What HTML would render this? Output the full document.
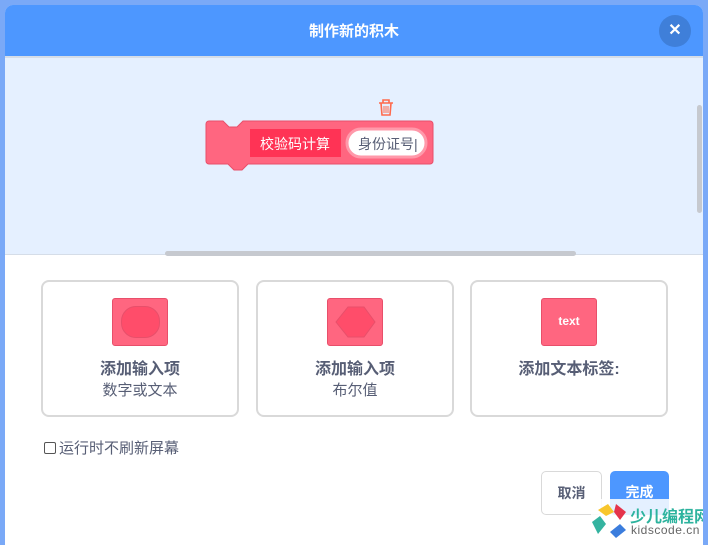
<!DOCTYPE html>
<html><head><meta charset="utf-8"><style>
*{box-sizing:border-box;margin:0;padding:0}
body{width:708px;height:542px;background:#7aa9f7;font-family:"Liberation Sans","Noto Sans CJK SC",sans-serif;position:relative;overflow:hidden}
.dlg{position:absolute;left:5px;top:5px;width:698px;height:540px;background:#fff;border-radius:8px 8px 0 0;overflow:hidden}
.hd{height:51px;background:#4d97ff;color:#fff;font-size:15px;text-align:center;line-height:54px;font-weight:bold}
.x{position:absolute;right:12px;top:10px;width:32px;height:32px;border-radius:50%;background:#3f7fd9;color:#fff;font-size:16px;text-align:center;line-height:32px;font-weight:bold}
.ws{position:absolute;top:51px;left:0;width:698px;height:199px;background:#e5f0ff;border-top:2px solid #d5dde8;border-bottom:1px solid #d5dde8}
.card{position:absolute;top:275px;width:198px;height:137px;border:2px solid #d9d9d9;border-radius:8px;text-align:center;color:#575e75}
.card b{display:block;margin-top:78px;font-size:16px;line-height:20px}
.card span{display:block;font-size:15px;line-height:20px;margin-top:1px}
.ic{position:absolute;left:69px;top:16px;width:56px;height:48px;background:#ff6680;border:1px solid #e84f6a;border-radius:3px}
</style></head><body>
<div class="dlg">
<div class="hd">制作新的积木</div><div class="x">✕</div>
<div class="ws">
<svg width="698" height="199" style="position:absolute;left:0;top:0">
<g transform="translate(381,41)" fill="none" stroke="#ff6a4d" stroke-width="1.6"><path d="M-7 4h14M-3 4v-3h6v3M-5 4l1 12h8l1-12"/><path d="M-2 7v7M0 7v7M2 7v7" stroke-width="1"/></g>
<path d="M204 63 h14 l6 6 h8 l6-6 h187 a3 3 0 0 1 3 3 v37 a3 3 0 0 1-3 3 h-182 l-6 6 h-8 l-6-6 h-19 a3 3 0 0 1-3-3 v-37 a3 3 0 0 1 3-3z" fill="#ff6680" stroke="#e84f6a"/>
<rect x="245" y="71" width="91" height="28" fill="#ff3355"/>
<text x="290" y="91" fill="#fff" font-size="14" text-anchor="middle" font-family="Liberation Sans,Noto Sans CJK SC,sans-serif">校验码计算</text>
<rect x="342" y="71" width="79" height="28" rx="14" fill="#fff" stroke="#ff99aa" stroke-width="3"/>
<text x="353" y="91" fill="#575e75" font-size="14" font-family="Liberation Sans,Noto Sans CJK SC,sans-serif">身份证号|</text>
<rect x="160" y="193" width="411" height="5" rx="2.5" fill="#c6c9cf"/>
<rect x="692" y="47" width="5" height="108" rx="2.5" fill="#c6c9cf"/>
</svg></div>
<div class="card" style="left:36px"><div class="ic"><div style="position:absolute;left:8px;top:7px;width:39px;height:32px;border-radius:15px;border:1px solid #e84f6a;background:#ff4d6a"></div></div><b>添加输入项</b><span>数字或文本</span></div>
<div class="card" style="left:251px"><div class="ic"><svg width="56" height="48" style="position:absolute;left:0;top:0"><path d="M20 8h16l11 15-11 15H20L8 23z" fill="#ff4d6a" stroke="#e84f6a"/></svg></div><b>添加输入项</b><span>布尔值</span></div>
<div class="card" style="left:465px"><div class="ic" style="color:#fff;font-size:12px;font-weight:bold;line-height:44px">text</div><b>添加文本标签:</b></div>
<div style="position:absolute;left:39px;top:432px;font-size:15px;color:#575e75"><span style="display:inline-block;width:12px;height:12px;border:1px solid #555;border-radius:2px;vertical-align:-1px;margin-right:3px"></span>运行时不刷新屏幕</div>
<div style="position:absolute;left:536px;top:466px;width:61px;height:44px;border:1px solid #d9d9d9;border-radius:5px;text-align:center;line-height:42px;font-size:14px;font-weight:bold;color:#575e75">取消</div>
<div style="position:absolute;left:605px;top:466px;width:59px;height:44px;background:#4d97ff;border-radius:5px;text-align:center;line-height:42px;font-size:14px;font-weight:bold;color:#fff">完成</div>
<div style="position:absolute;left:586px;top:494px;width:120px;height:50px;background:rgba(255,255,255,.85);border-radius:8px 0 0 0"></div>
<svg width="50" height="44" style="position:absolute;left:583px;top:493px"><path d="M10 12l10-6 6 8-8 4z" fill="#f8c62c"/><path d="M28 6l10 8-6 8-6-8z" fill="#e5334b"/><path d="M4 24l8-6 6 8-8 10z" fill="#34b3a0"/><path d="M22 34l10-8 6 6-10 8z" fill="#3b7ddd"/></svg>
<div style="position:absolute;left:625px;top:498px;color:#2db39e;font-size:16px;font-weight:bold;white-space:nowrap">少儿编程网</div>
<div style="position:absolute;left:626px;top:518px;color:#666;font-size:12px;letter-spacing:.5px;white-space:nowrap">kidscode.cn</div>
</div>
</body></html>
